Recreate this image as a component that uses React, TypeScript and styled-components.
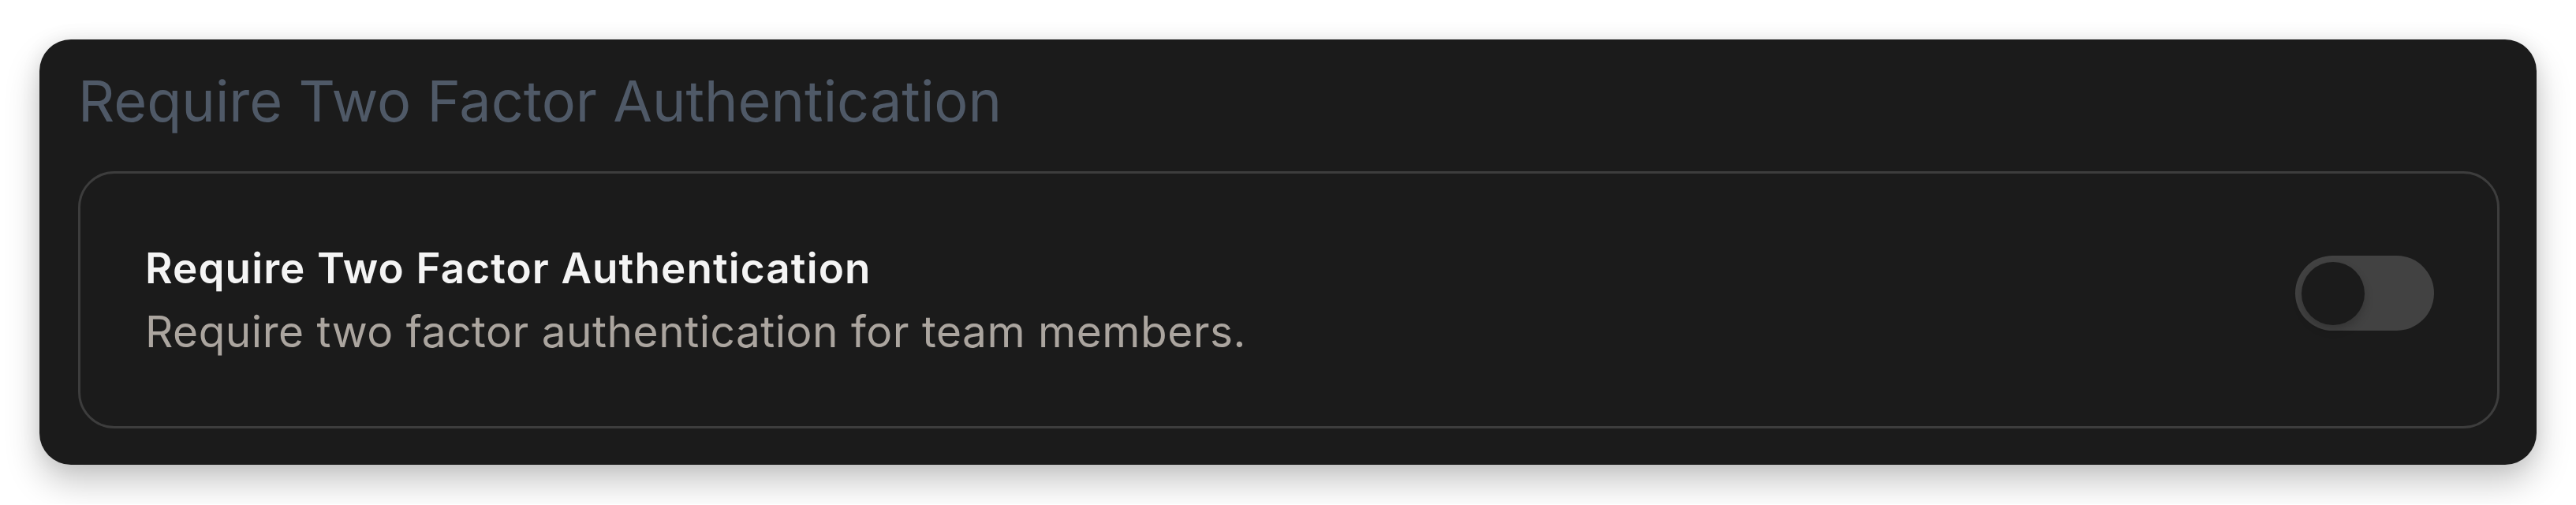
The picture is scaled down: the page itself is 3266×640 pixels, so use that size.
import styled, { createGlobalStyle } from 'styled-components';

const GlobalStyle = createGlobalStyle`
  html, body {
    margin: 0;
    padding: 0;
    background: #ffffff;
    font-family: Inter, "Noto Sans", sans-serif;
  }
`;

const Page = styled.div`
  padding: 50px;
`;

const Card = styled.section`
  display: flex;
  flex-direction: column;
  gap: 46px;
  padding: 34px 47px 46px 49px;
  background: #1b1b1b;
  border-radius: 40px;
  box-shadow: 0 22px 44px rgba(0, 0, 0, 0.22), 0 0 24px rgba(0, 0, 0, 0.08);
`;

const CardTitle = styled.h2`
  margin: 0;
  font-size: 72px;
  font-weight: 400;
  line-height: 87px;
  color: #4f5967;
`;

const SettingRow = styled.div`
  display: flex;
  align-items: flex-start;
  justify-content: space-between;
  padding: 80px 80px 80px 82px;
  border: 3px solid #3d3d3d;
  border-radius: 46px;
`;

const SettingText = styled.div`
  display: flex;
  flex-direction: column;
`;

const SettingLabel = styled.span`
  font-size: 53px;
  font-weight: 600;
  line-height: 80px;
  letter-spacing: 1.1px;
  color: #f4f4f4;
`;

const SettingHint = styled.span`
  font-size: 55px;
  font-weight: 400;
  line-height: 80px;
  letter-spacing: 0.5px;
  color: #aba59f;
`;

const Switch = styled.button<{ $on?: boolean }>`
  display: flex;
  align-items: center;
  justify-content: ${({ $on }) => ($on ? 'flex-end' : 'flex-start')};
  margin-top: 24px;
  width: 176px;
  height: 95px;
  padding: 0 8px;
  border: none;
  border-radius: 48px;
  background: ${({ $on }) => ($on ? '#3b82f6' : '#424242')};
  cursor: pointer;
`;

const Knob = styled.span`
  width: 80px;
  height: 80px;
  border-radius: 50%;
  background: #1b1b1b;
  box-shadow: 0 6px 12px rgba(0, 0, 0, 0.2);
`;

export default function App() {
  return (
    <>
      <GlobalStyle />
      <Page>
        <Card>
          <CardTitle>Require Two Factor Authentication</CardTitle>
          <SettingRow>
            <SettingText>
              <SettingLabel>Require Two Factor Authentication</SettingLabel>
              <SettingHint>Require two factor authentication for team members.</SettingHint>
            </SettingText>
            <Switch type="button" role="switch" aria-checked={false}>
              <Knob />
            </Switch>
          </SettingRow>
        </Card>
      </Page>
    </>
  );
}
